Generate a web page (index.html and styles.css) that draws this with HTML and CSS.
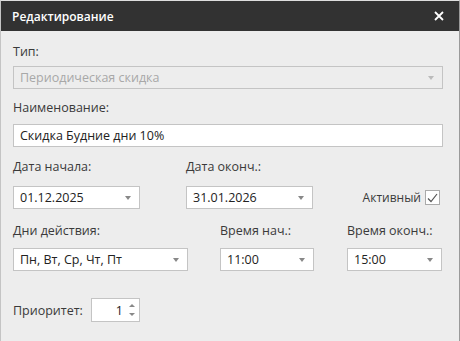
FILE: index.html
```html
<!DOCTYPE html>
<html lang="ru">
<head>
<meta charset="utf-8">
<link rel="stylesheet" href="styles.css">
</head>
<body>
<div class="dialog">
  <div class="header">
    <span class="title">Редактирование</span>
    <svg class="close" width="10" height="10" viewBox="0 0 10 10"><path d="M1 1L9 9M9 1L1 9" stroke="#fff" stroke-width="1.8"/></svg>
  </div>
  <div class="content">
    <div class="field f-type">
      <div class="label">Тип:</div>
      <div class="box disabled"><span>Периодическая скидка</span><span class="arrow"></span></div>
    </div>
    <div class="field f-name">
      <div class="label">Наименование:</div>
      <div class="box"><span>Скидка Будние дни 10%</span></div>
    </div>
    <div class="row r-dates">
      <div class="field w127">
        <div class="label">Дата начала:</div>
        <div class="box"><span>01.12.2025</span><span class="arrow"></span></div>
      </div>
      <div class="field w127">
        <div class="label">Дата оконч.:</div>
        <div class="box"><span>31.01.2026</span><span class="arrow"></span></div>
      </div>
      <div class="active">
        <span>Активный</span>
        <span class="check"><svg width="11" height="10" viewBox="0 0 11 10"><path d="M1 5.5L4 8.5L10 1" fill="none" stroke="#555" stroke-width="1.2"/></svg></span>
      </div>
    </div>
    <div class="row r-days">
      <div class="field w175">
        <div class="label">Дни действия:</div>
        <div class="box"><span>Пн, Вт, Ср, Чт, Пт</span><span class="arrow"></span></div>
      </div>
      <div class="field w94">
        <div class="label">Время нач.:</div>
        <div class="box"><span>11:00</span><span class="arrow"></span></div>
      </div>
      <div class="field w95">
        <div class="label">Время оконч.:</div>
        <div class="box"><span>15:00</span><span class="arrow"></span></div>
      </div>
    </div>
    <div class="prio">
      <span class="label-inline">Приоритет:</span>
      <div class="spin">
        <span class="num">1</span>
        <span class="spin-btns"><span class="up"></span><span class="down"></span></span>
      </div>
    </div>
  </div>
</div>
</body>
</html>
```
FILE: styles.css
```css
html, body {
  margin: 0;
  padding: 0;
  background: #ededed;
}
body {
  font-family: "Open Sans", "Noto Sans", sans-serif;
  font-size: 12.5px;
  color: #3a3a3a;
}
.dialog {
  width: 460px;
  height: 341px;
  box-sizing: border-box;
  border-top: 1px solid #dedede;
  border-left: 1px solid #c4c4c4;
  border-right: 1px solid #9a9a9a;
  background: #ededed;
}
.header {
  height: 30px;
  background: #323232;
  display: flex;
  align-items: center;
  justify-content: space-between;
  padding: 0 15px 0 11px;
}
.title {
  color: #fff;
  font-weight: 600;
  font-size: 12px;
}
.content {
  padding: 13px 16px 0 12px;
}
.field {
  display: flex;
  flex-direction: column;
}
.label {
  height: 16px;
  line-height: 16px;
  white-space: nowrap;
}
.f-type .label { margin-bottom: 6px; }
.f-name { margin-top: 11px; }
.f-name .label { margin-bottom: 8px; }
.r-dates { margin-top: 12px; }
.r-dates .label { margin-bottom: 11px; }
.r-days { margin-top: 14px; }
.r-days .label { margin-bottom: 9px; }
.box {
  height: 23px;
  box-sizing: border-box;
  border: 1px solid #c4c4c4;
  background: #fff;
  display: flex;
  align-items: center;
  justify-content: space-between;
  padding: 0 8px 0 6px;
  color: #222;
}
.box.disabled {
  background: #ededed;
  color: #a8a8a8;
}
.arrow {
  width: 0;
  height: 0;
  border-left: 3.5px solid transparent;
  border-right: 3.5px solid transparent;
  border-top: 4px solid #888;
}
.disabled .arrow { border-top-color: #bbb; }
.row {
  display: flex;
  align-items: flex-end;
}
.w127 { width: 127px; margin-right: 46px; }
.w175 { width: 175px; margin-right: 32px; }
.w94 { width: 94px; margin-right: 33px; }
.w95 { width: 95px; }
.active {
  margin-left: auto;
  display: flex;
  align-items: center;
  height: 23px;
  font-size: 12px;
  margin-right: 3px;
}
.check {
  width: 15px;
  height: 15px;
  box-sizing: border-box;
  border: 1px solid #aaa;
  background: #fff;
  margin-left: 4px;
  display: flex;
  align-items: center;
  justify-content: center;
}
.prio {
  display: flex;
  align-items: center;
  margin-top: 27px;
}
.label-inline { width: 78px; }
.spin {
  width: 49px;
  height: 24px;
  box-sizing: border-box;
  border: 1px solid #c4c4c4;
  background: #fff;
  display: flex;
  align-items: center;
  justify-content: flex-end;
  padding-right: 4px;
}
.num { margin-right: 6px; color: #222; }
.spin-btns {
  display: flex;
  flex-direction: column;
  gap: 6px;
}
.up, .down {
  width: 0; height: 0;
  border-left: 3px solid transparent;
  border-right: 3px solid transparent;
}
.up { border-bottom: 3px solid #888; }
.down { border-top: 3px solid #888; }
```
